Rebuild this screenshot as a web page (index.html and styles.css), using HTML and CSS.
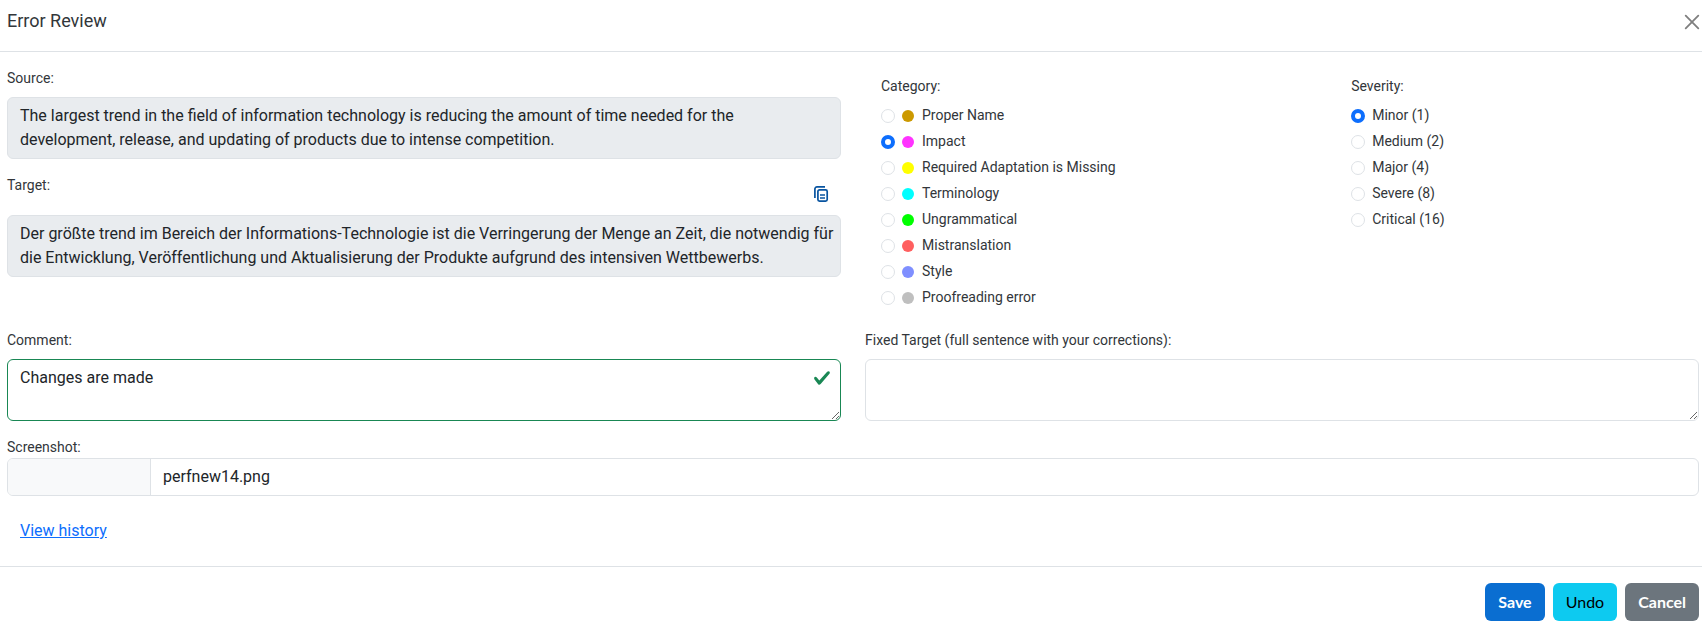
FILE: index.html
```html
<!DOCTYPE html>
<html lang="en">
<head>
<meta charset="utf-8">
<title>Error Review</title>
<link rel="stylesheet" href="styles.css">
</head>
<body>
<form class="dialog">
  <header class="dialog-header">
    <h1 class="dialog-title">Error Review</h1>
    <button type="button" class="close-button" aria-label="Close">
      <svg viewBox="0 0 16 16" width="16" height="16"><path d="M1.7 1.7 14.3 14.3M14.3 1.7 1.7 14.3" fill="none" stroke="currentColor" stroke-width="1.8" stroke-linecap="round"/></svg>
    </button>
  </header>

  <main class="dialog-body">
    <div class="columns">
      <div class="stack">
        <div class="field">
          <label for="source">Source:</label>
          <textarea id="source" class="control" rows="2" disabled>The largest trend in the field of information technology is reducing the amount of time needed for the
development, release, and updating of products due to intense competition.</textarea>
        </div>
        <div class="field">
          <div class="label-row">
            <label for="target">Target:</label>
            <button type="button" class="copy-button" aria-label="Copy target">
              <svg viewBox="0 0 16 16" width="16" height="16" fill="none" stroke="currentColor" stroke-width="1.7"><path d="M1.9 12V3a2.100 2.100 0 0 1 2.100-2.100H12"/><rect x="4.900" y="3.900" width="9.300" height="11.200" rx="1.600"/><path d="M7 9h5M7 12h5"/></svg>
            </button>
          </div>
          <textarea id="target" class="control" rows="2" disabled>Der größte trend im Bereich der Informations-Technologie ist die Verringerung der Menge an Zeit, die notwendig für
die Entwicklung, Veröffentlichung und Aktualisierung der Produkte aufgrund des intensiven Wettbewerbs.</textarea>
        </div>
      </div>

      <div class="choices">
        <fieldset class="choice-group">
          <legend>Category:</legend>
          <label class="choice"><input type="radio" name="category"><span class="swatch proper-name"></span>Proper Name</label>
          <label class="choice"><input type="radio" name="category" checked><span class="swatch impact"></span>Impact</label>
          <label class="choice"><input type="radio" name="category"><span class="swatch adaptation"></span>Required Adaptation is Missing</label>
          <label class="choice"><input type="radio" name="category"><span class="swatch terminology"></span>Terminology</label>
          <label class="choice"><input type="radio" name="category"><span class="swatch ungrammatical"></span>Ungrammatical</label>
          <label class="choice"><input type="radio" name="category"><span class="swatch mistranslation"></span>Mistranslation</label>
          <label class="choice"><input type="radio" name="category"><span class="swatch style"></span>Style</label>
          <label class="choice"><input type="radio" name="category"><span class="swatch proofreading"></span>Proofreading error</label>
        </fieldset>
        <fieldset class="choice-group">
          <legend>Severity:</legend>
          <label class="choice"><input type="radio" name="severity" checked>Minor (1)</label>
          <label class="choice"><input type="radio" name="severity">Medium (2)</label>
          <label class="choice"><input type="radio" name="severity">Major (4)</label>
          <label class="choice"><input type="radio" name="severity">Severe (8)</label>
          <label class="choice"><input type="radio" name="severity">Critical (16)</label>
        </fieldset>
      </div>
    </div>

    <div class="columns">
      <div class="field">
        <label for="comment">Comment:</label>
        <div class="validated">
          <textarea id="comment" class="control valid" rows="2">Changes are made</textarea>
          <svg class="valid-mark" viewBox="0 0 8 8" width="18" height="18" aria-hidden="true"><path fill="currentColor" d="M2.3 6.73.6 4.53c-.4-1.04.46-1.4 1.1-.8l1.1 1.4 3.4-3.8c.6-.63 1.6-.27 1.2.7l-4 4.6c-.43.5-.8.4-1.1.1z"/></svg>
        </div>
      </div>
      <div class="field">
        <label for="fixed">Fixed Target (full sentence with your corrections):</label>
        <textarea id="fixed" class="control" rows="2"></textarea>
      </div>
    </div>

    <div class="upload-field">
      <label for="screenshot">Screenshot:</label>
      <div class="upload">
        <span class="upload-button"></span>
        <span class="upload-name">perfnew14.png</span>
        <input id="screenshot" class="upload-input" type="file">
      </div>
    </div>

    <a class="history-link" href="#history">View history</a>
  </main>

  <footer class="dialog-footer">
    <button type="button" class="button save">Save</button>
    <button type="button" class="button undo">Undo</button>
    <button type="button" class="button cancel">Cancel</button>
  </footer>
</form>
</body>
</html>
```
FILE: styles.css
```css
* { box-sizing: border-box; }

body {
  margin: 0;
  background: #fff;
  color: #32363a;
  font: 14px/21px Roboto, "Liberation Sans", sans-serif;
}

button, textarea { font: inherit; }

.dialog-header {
  display: flex;
  justify-content: space-between;
  align-items: flex-start;
  padding: 7px 2px 17px 7px;
  border-bottom: 1px solid #dee2e6;
}

.dialog-title {
  margin: 0;
  font-size: 18px;
  line-height: 27px;
  font-weight: 400;
}

.close-button, .copy-button {
  display: flex;
  padding: 0;
  border: 0;
  background: none;
  cursor: pointer;
}

.close-button { padding-top: 7px; color: #7f7f7f; }

.dialog-body {
  display: flex;
  flex-direction: column;
  gap: 16px;
  padding: 16px 3px 16px 7px;
}

.columns {
  display: grid;
  grid-template-columns: 1fr 1fr;
  gap: 24px;
}

.stack, .field { display: flex; flex-direction: column; }
.stack { gap: 16px; }
.field { gap: 8px; }

.label-row {
  display: flex;
  justify-content: space-between;
  min-height: 32px;
}

.copy-button {
  align-self: flex-end;
  padding: 5px 12px;
  color: #0854a0;
}

.control {
  display: block;
  width: 100%;
  padding: 6px 4px 6px 12px;
  border: 1px solid #dee2e6;
  border-radius: 6px;
  background: #fff;
  color: #212529;
  font-size: 16px;
  line-height: 24px;
  overflow: hidden;
}

.control:disabled { background: #e9ecef; resize: none; }
.control.valid { border-color: #198754; padding-right: 36px; }

.validated { position: relative; }

.valid-mark {
  position: absolute;
  top: 10px;
  right: 10px;
  color: #198754;
}

.choices {
  display: grid;
  grid-template-columns: 7fr 5fr;
  padding: 8px 12px 6px 16px;
}

.choice-group {
  display: flex;
  flex-direction: column;
  gap: 5px;
  min-width: 0;
  margin: 0;
  padding: 0;
  border: 0;
}

legend { margin-bottom: 8px; padding: 0; }

.choice { display: flex; align-items: center; }

.choice input {
  appearance: none;
  width: 14px;
  height: 14px;
  margin: 0 7px 0 0;
  border: 1px solid #dee2e6;
  border-radius: 50%;
  background: #fff;
}

.choice input:checked { border: 4px solid #0d6efd; }

.swatch {
  width: 12px;
  height: 12px;
  margin-right: 8px;
  border-radius: 50%;
}

.proper-name { background: #cc9900; }
.impact { background: #ff33ff; }
.adaptation { background: #ffff00; }
.terminology { background: #00ffff; }
.ungrammatical { background: #00ff00; }
.mistranslation { background: #ff5f5f; }
.style { background: #7f8fff; }
.proofreading { background: #bfbfbf; }

.upload-field { display: flex; flex-direction: column; }

.upload {
  position: relative;
  display: flex;
  border: 1px solid #dee2e6;
  border-radius: 6px;
  overflow: hidden;
  color: #212529;
  font-size: 16px;
  line-height: 24px;
}

.upload-button {
  width: 143px;
  border-right: 1px solid #dee2e6;
  background: #f8f9fa;
}

.upload-name { padding: 6px 12px; }

.upload-input {
  position: absolute;
  inset: 0;
  width: 100%;
  opacity: 0;
}

.history-link {
  align-self: flex-start;
  padding: 7px 13px;
  color: #0d6efd;
  font-size: 16px;
  line-height: 24px;
}

.dialog-footer {
  display: flex;
  justify-content: flex-end;
  gap: 8px;
  padding: 16px 3px 8px;
  border-top: 1px solid #dee2e6;
}

.button {
  padding: 7px 13px;
  border: 0;
  border-radius: 6px;
  font: 700 16px/24px Lato, "Open Sans", sans-serif;
  color: #fff;
  cursor: pointer;
}

.save { background: #0a6ed1; }
.undo { background: #0dcaf0; color: #000; font-weight: 400; }
.cancel { background: #6c757d; }
```
